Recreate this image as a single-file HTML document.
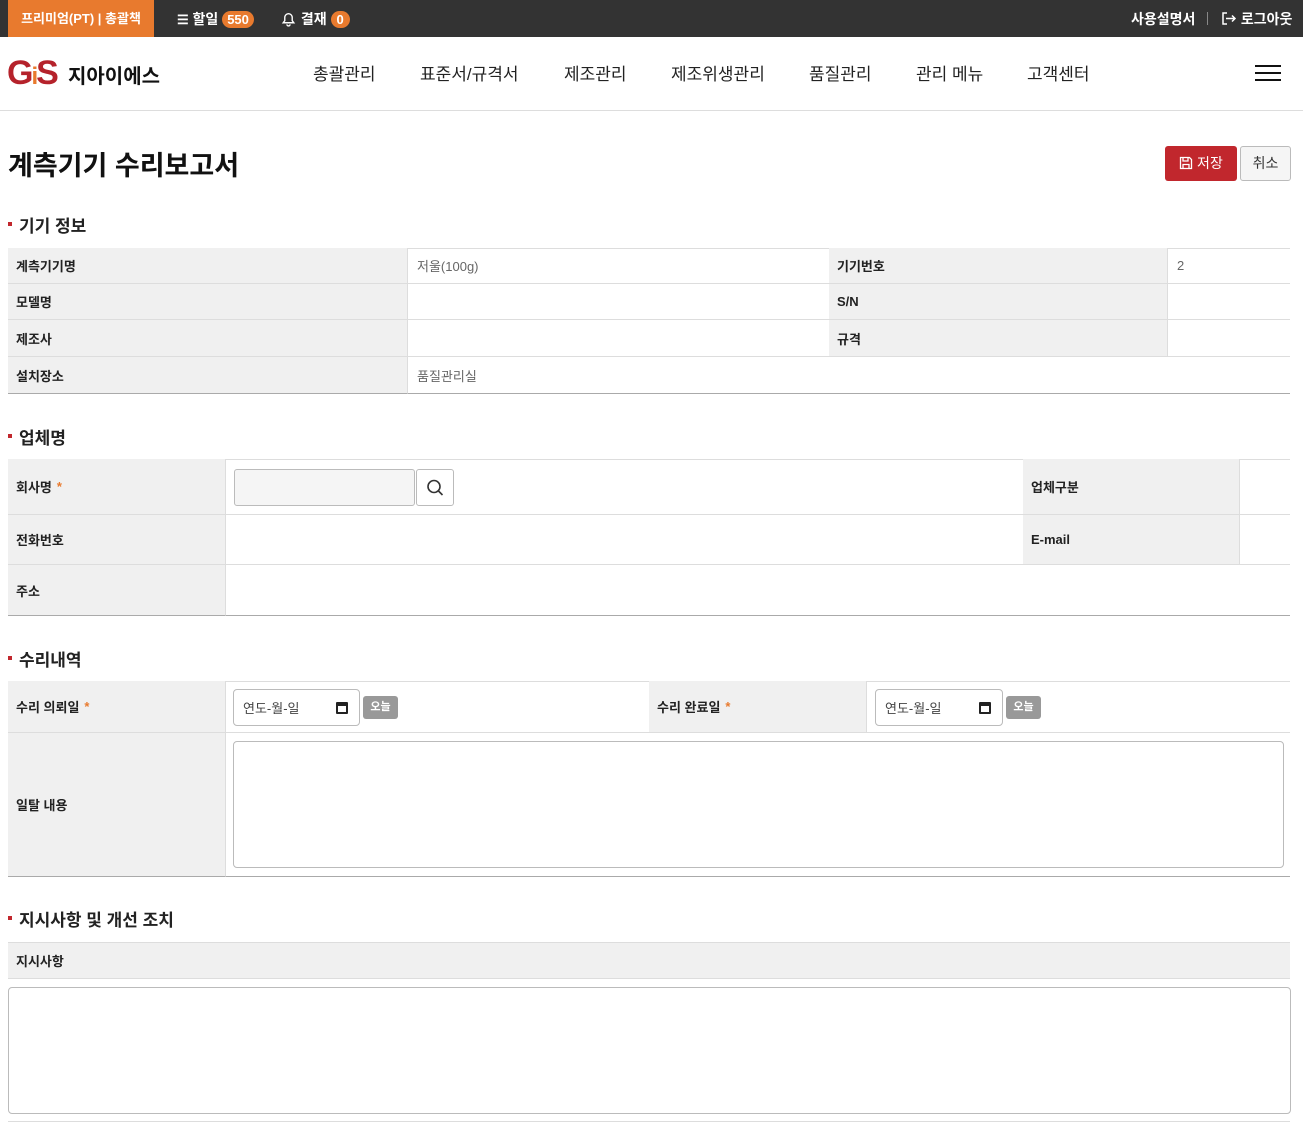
<!DOCTYPE html>
<html><head><meta charset="utf-8"><style>
*{box-sizing:border-box;margin:0;padding:0}
body{width:1303px;height:1125px;overflow:hidden;background:#fff;font-family:"Liberation Sans","Noto Sans CJK KR",sans-serif;color:#222;position:relative}
.a{position:absolute}
.top{left:0;top:0;width:1303px;height:37px;background:#333}
.w{color:#fff;font-size:14px;font-weight:bold;top:9px}
.badge{background:#e87a2e;color:#fff;border-radius:10px;font-size:13px;font-weight:bold;padding:1px 5px;line-height:17px}
.nav{top:60px;font-size:17px;color:#222}
.sec{font-size:17px;font-weight:bold;color:#222}
.sec:before{content:"";position:absolute;left:-11px;top:10px;width:4px;height:4px;background:#c1272d}
.lb{background:#f0f0f0;font-size:13px;font-weight:bold;padding-left:8px;display:flex;align-items:center;border-bottom:1px solid #ddd;border-right:1px solid #ddd}
.vl{font-size:13px;color:#666;padding-left:9px;display:flex;align-items:center;border-bottom:1px solid #ddd}
.hl{border-top:1px solid #ddd}
.req{color:#e87a2e;margin-left:5px}
.date{border:1px solid #bbb;border-radius:4px;background:#fff;font-size:13px;color:#444;padding-left:9px;display:flex;align-items:center}
.today{background:#999;color:#fff;font-size:11px;font-weight:bold;border-radius:3px;width:35px;height:23px;text-align:center;line-height:23px}
.ta{border:1px solid #bbb;border-radius:4px;background:#fff}
.cal{position:absolute;top:12px;width:12px;height:12px;border:2px solid #222;border-top-width:4px;border-radius:1px}
</style></head><body>
<div class="a top"></div>
<div class="a" style="left:8px;top:0;width:146px;height:37px;background:#e87a2e;color:#fff;font-size:13px;font-weight:bold;text-align:center;line-height:37px">프리미엄(PT) | 총괄책</div>
<div class="a w" style="left:177px"><span style="font-size:13px">☰</span> 할일 <span class="badge">550</span></div>
<div class="a w" style="left:280px"><svg width="17" height="17" viewBox="0 0 16 16" style="vertical-align:-3px"><path d="M3 12h10l-1.5-2V7a3.5 3.5 0 0 0-7 0v3z M6.5 13.5a1.5 1.5 0 0 0 3 0" fill="none" stroke="#fff" stroke-width="1.3"/></svg> 결재 <span class="badge" style="padding:1px 6px">0</span></div>
<div class="a w" style="left:1131px">사용설명서</div>
<div class="a" style="left:1207px;top:12px;width:1px;height:13px;background:#888"></div>
<div class="a w" style="left:1221px"><svg width="16" height="15" viewBox="0 0 16 15" style="vertical-align:-2px"><path d="M6 2H2v11h4 M5 7.5h9 M11 4.5l3 3-3 3" fill="none" stroke="#fff" stroke-width="1.5"/></svg> 로그아웃</div>

<div class="a" style="left:7px;top:54px;font-size:34px;font-weight:900;color:#b5222b;letter-spacing:-2px;font-family:'Liberation Sans',sans-serif">G<span style="font-size:24px;color:#e87a2e">i</span>S</div>
<div class="a" style="left:68px;top:60px;font-size:20px;font-weight:bold;color:#111">지아이에스</div>
<div class="a nav" style="left:313px">총괄관리</div>
<div class="a nav" style="left:420px">표준서/규격서</div>
<div class="a nav" style="left:564px">제조관리</div>
<div class="a nav" style="left:671px">제조위생관리</div>
<div class="a nav" style="left:809px">품질관리</div>
<div class="a nav" style="left:916px">관리 메뉴</div>
<div class="a nav" style="left:1027px">고객센터</div>
<div class="a" style="left:1255px;top:65px;width:26px;height:2px;background:#111;box-shadow:0 7px 0 #111,0 14px 0 #111"></div>
<div class="a" style="left:0;top:110px;width:1303px;height:1px;background:#ddd"></div>

<div class="a" style="left:8px;top:144px;font-size:27px;font-weight:bold;color:#111">계측기기 수리보고서</div>
<div class="a" style="left:1165px;top:146px;width:72px;height:35px;background:#c1272d;border-radius:3px;color:#fff;font-size:14px;text-align:center;line-height:35px"><svg width="14" height="14" viewBox="0 0 14 14" style="vertical-align:-2px"><path d="M1.5 1.5h9l2 2v9h-11z M4 1.5v3.5h5V1.5 M4 12.5V8.5h6v4" fill="none" stroke="#fff" stroke-width="1.3"/></svg> 저장</div>
<div class="a" style="left:1240px;top:146px;width:51px;height:35px;background:#f5f5f5;border:1px solid #bbb;border-radius:3px;color:#333;font-size:14px;text-align:center;line-height:33px">취소</div>

<div class="a sec" style="left:19px;top:212px">기기 정보</div>
<div class="a hl" style="left:8px;top:248px;width:1282px"></div>
<div class="a lb" style="left:8px;top:248px;width:400px;height:36px">계측기기명</div>
<div class="a vl" style="left:408px;top:248px;width:421px;height:36px">저울(100g)</div>
<div class="a lb" style="left:829px;top:248px;width:339px;height:36px">기기번호</div>
<div class="a vl" style="left:1168px;top:248px;width:122px;height:36px">2</div>
<div class="a lb" style="left:8px;top:284px;width:400px;height:36px">모델명</div>
<div class="a vl" style="left:408px;top:284px;width:421px;height:36px"></div>
<div class="a lb" style="left:829px;top:284px;width:339px;height:36px">S/N</div>
<div class="a vl" style="left:1168px;top:284px;width:122px;height:36px"></div>
<div class="a lb" style="left:8px;top:320px;width:400px;height:37px">제조사</div>
<div class="a vl" style="left:408px;top:320px;width:421px;height:37px"></div>
<div class="a lb" style="left:829px;top:320px;width:339px;height:37px">규격</div>
<div class="a vl" style="left:1168px;top:320px;width:122px;height:37px"></div>
<div class="a lb" style="left:8px;top:357px;width:400px;height:37px;border-bottom-color:#aaa">설치장소</div>
<div class="a vl" style="left:408px;top:357px;width:882px;height:37px;border-bottom-color:#aaa">품질관리실</div>

<div class="a sec" style="left:19px;top:424px">업체명</div>
<div class="a hl" style="left:8px;top:459px;width:1282px"></div>
<div class="a lb" style="left:8px;top:459px;width:218px;height:56px">회사명<span class="req">*</span></div>
<div class="a vl" style="left:226px;top:459px;width:797px;height:56px"></div>
<div class="a" style="left:234px;top:469px;width:181px;height:37px;background:#f5f5f5;border:1px solid #bbb;border-radius:3px"></div>
<div class="a" style="left:416px;top:469px;width:38px;height:37px;background:#fff;border:1px solid #bbb;border-radius:3px"><svg width="36" height="35" viewBox="0 0 36 35"><circle cx="17" cy="16.5" r="6" fill="none" stroke="#333" stroke-width="1.6"/><path d="M21.5 21l4 4" stroke="#333" stroke-width="1.6"/></svg></div>
<div class="a lb" style="left:1023px;top:459px;width:217px;height:56px">업체구분</div>
<div class="a vl" style="left:1240px;top:459px;width:50px;height:56px"></div>
<div class="a lb" style="left:8px;top:515px;width:218px;height:50px">전화번호</div>
<div class="a vl" style="left:226px;top:515px;width:797px;height:50px"></div>
<div class="a lb" style="left:1023px;top:515px;width:217px;height:50px">E-mail</div>
<div class="a vl" style="left:1240px;top:515px;width:50px;height:50px"></div>
<div class="a lb" style="left:8px;top:565px;width:218px;height:51px;border-bottom-color:#aaa">주소</div>
<div class="a vl" style="left:226px;top:565px;width:1064px;height:51px;border-bottom-color:#aaa"></div>

<div class="a sec" style="left:19px;top:646px">수리내역</div>
<div class="a hl" style="left:8px;top:681px;width:1282px"></div>
<div class="a lb" style="left:8px;top:681px;width:218px;height:52px">수리 의뢰일<span class="req">*</span></div>
<div class="a vl" style="left:226px;top:681px;width:423px;height:52px"></div>
<div class="a date" style="left:233px;top:689px;width:127px;height:37px">연도-월-일<span class="cal" style="left:102px"></span></div>
<div class="a today" style="left:363px;top:696px">오늘</div>
<div class="a lb" style="left:649px;top:681px;width:218px;height:52px">수리 완료일<span class="req">*</span></div>
<div class="a vl" style="left:867px;top:681px;width:423px;height:52px"></div>
<div class="a date" style="left:875px;top:689px;width:128px;height:37px">연도-월-일<span class="cal" style="left:103px"></span></div>
<div class="a today" style="left:1006px;top:696px">오늘</div>
<div class="a lb" style="left:8px;top:733px;width:218px;height:144px;border-bottom-color:#aaa">일탈 내용</div>
<div class="a vl" style="left:226px;top:733px;width:1064px;height:144px;border-bottom-color:#aaa"></div>
<div class="a ta" style="left:233px;top:741px;width:1051px;height:127px"></div>

<div class="a sec" style="left:19px;top:906px">지시사항 및 개선 조치</div>
<div class="a lb" style="left:8px;top:942px;width:1282px;height:37px;border-top:1px solid #ddd;border-right:none">지시사항</div>
<div class="a ta" style="left:8px;top:987px;width:1283px;height:127px"></div>
<div class="a" style="left:8px;top:1121px;width:1282px;height:1px;background:#ddd"></div>
</body></html>
